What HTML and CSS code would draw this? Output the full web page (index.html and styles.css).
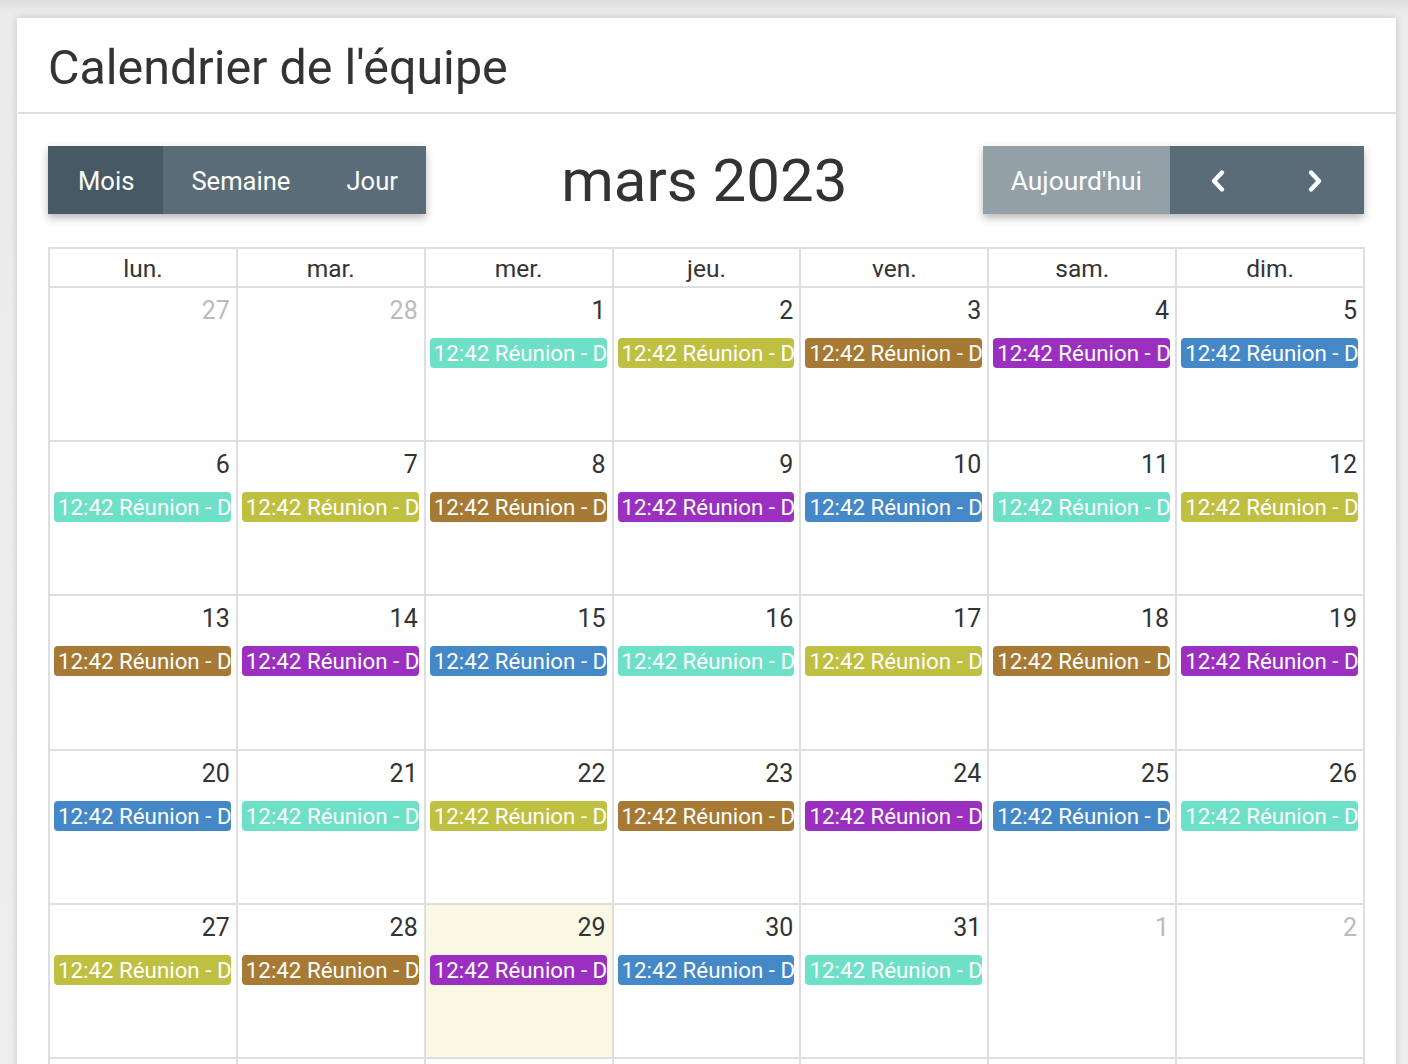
FILE: index.html
```html
<!DOCTYPE html>
<html lang="fr">
<head>
<meta charset="utf-8">
<title>Calendrier de l'équipe</title>
<link rel="stylesheet" href="styles.css">
</head>
<body>
<div class="card">
  <div class="card-header"><h1 class="card-title">Calendrier de l'équipe</h1></div>
  <div class="card-body">
    <div class="toolbar">
      <div class="btn-group">
        <button class="btn active">Mois</button>
        <button class="btn">Semaine</button>
        <button class="btn">Jour</button>
      </div>
      <h2 class="cal-title">mars 2023</h2>
      <div class="btn-group">
        <button class="btn btn-light">Aujourd'hui</button>
        <button class="btn btn-icon" aria-label="précédent"><svg width="18" height="24" viewBox="0 0 18 24"><path d="M13 3.5 L5 12 L13 20.5" fill="none" stroke="#fff" stroke-width="4.4" stroke-linecap="round" stroke-linejoin="round"/></svg></button>
        <button class="btn btn-icon" aria-label="suivant"><svg width="18" height="24" viewBox="0 0 18 24"><path d="M5 3.5 L13 12 L5 20.5" fill="none" stroke="#fff" stroke-width="4.4" stroke-linecap="round" stroke-linejoin="round"/></svg></button>
      </div>
    </div>

    <div class="month">
      <div class="dow">lun.</div><div class="dow">mar.</div><div class="dow">mer.</div><div class="dow">jeu.</div><div class="dow">ven.</div><div class="dow">sam.</div><div class="dow">dim.</div>

      <div class="day other"><div class="num">27</div></div>
      <div class="day other"><div class="num">28</div></div>
      <div class="day"><div class="num">1</div><div class="ev teal">12:42 Réunion - D</div></div>
      <div class="day"><div class="num">2</div><div class="ev olive">12:42 Réunion - D</div></div>
      <div class="day"><div class="num">3</div><div class="ev brown">12:42 Réunion - D</div></div>
      <div class="day"><div class="num">4</div><div class="ev purple">12:42 Réunion - D</div></div>
      <div class="day"><div class="num">5</div><div class="ev blue">12:42 Réunion - D</div></div>

      <div class="day"><div class="num">6</div><div class="ev teal">12:42 Réunion - D</div></div>
      <div class="day"><div class="num">7</div><div class="ev olive">12:42 Réunion - D</div></div>
      <div class="day"><div class="num">8</div><div class="ev brown">12:42 Réunion - D</div></div>
      <div class="day"><div class="num">9</div><div class="ev purple">12:42 Réunion - D</div></div>
      <div class="day"><div class="num">10</div><div class="ev blue">12:42 Réunion - D</div></div>
      <div class="day"><div class="num">11</div><div class="ev teal">12:42 Réunion - D</div></div>
      <div class="day"><div class="num">12</div><div class="ev olive">12:42 Réunion - D</div></div>

      <div class="day"><div class="num">13</div><div class="ev brown">12:42 Réunion - D</div></div>
      <div class="day"><div class="num">14</div><div class="ev purple">12:42 Réunion - D</div></div>
      <div class="day"><div class="num">15</div><div class="ev blue">12:42 Réunion - D</div></div>
      <div class="day"><div class="num">16</div><div class="ev teal">12:42 Réunion - D</div></div>
      <div class="day"><div class="num">17</div><div class="ev olive">12:42 Réunion - D</div></div>
      <div class="day"><div class="num">18</div><div class="ev brown">12:42 Réunion - D</div></div>
      <div class="day"><div class="num">19</div><div class="ev purple">12:42 Réunion - D</div></div>

      <div class="day"><div class="num">20</div><div class="ev blue">12:42 Réunion - D</div></div>
      <div class="day"><div class="num">21</div><div class="ev teal">12:42 Réunion - D</div></div>
      <div class="day"><div class="num">22</div><div class="ev olive">12:42 Réunion - D</div></div>
      <div class="day"><div class="num">23</div><div class="ev brown">12:42 Réunion - D</div></div>
      <div class="day"><div class="num">24</div><div class="ev purple">12:42 Réunion - D</div></div>
      <div class="day"><div class="num">25</div><div class="ev blue">12:42 Réunion - D</div></div>
      <div class="day"><div class="num">26</div><div class="ev teal">12:42 Réunion - D</div></div>

      <div class="day"><div class="num">27</div><div class="ev olive">12:42 Réunion - D</div></div>
      <div class="day"><div class="num">28</div><div class="ev brown">12:42 Réunion - D</div></div>
      <div class="day today"><div class="num">29</div><div class="ev purple">12:42 Réunion - D</div></div>
      <div class="day"><div class="num">30</div><div class="ev blue">12:42 Réunion - D</div></div>
      <div class="day"><div class="num">31</div><div class="ev teal">12:42 Réunion - D</div></div>
      <div class="day other"><div class="num">1</div></div>
      <div class="day other"><div class="num">2</div></div>

      <div class="day other"></div>
      <div class="day other"></div>
      <div class="day other"></div>
      <div class="day other"></div>
      <div class="day other"></div>
      <div class="day other"></div>
      <div class="day other"></div>
    </div>
  </div>
</div>
</body>
</html>
```

FILE: styles.css
```css
* { box-sizing: border-box; }

html, body { height: 100%; }

body {
  margin: 0;
  padding: 18px 12px 0 17px;
  background: linear-gradient(#dedede 0, #ececec 14px, #eeeeee 100%);
  font-family: Roboto, "Liberation Sans", sans-serif;
  color: #333;
  overflow: hidden;
}

.card {
  background: #fff;
  box-shadow: 0 0 8px rgba(0, 0, 0, 0.16);
}

.card-header {
  height: 96px;
  display: flex;
  align-items: center;
  padding: 4px 32px 0 30px;
  border-bottom: 2px solid #dedede;
  margin-left: 1px;
}

.card-title {
  margin: 0;
  font-size: 48.4px;
  font-weight: 400;
  color: #333;
}

.card-body {
  padding: 32px 32px 0 31px;
}

.toolbar {
  display: flex;
  align-items: center;
  justify-content: space-between;
  height: 68px;
  margin-bottom: 33px;
}

.btn-group {
  display: flex;
  height: 68px;
  box-shadow: 0 4px 8px rgba(0, 0, 0, 0.28);
}

.btn {
  border: 0;
  margin: 0;
  padding: 1px 28px 0;
  height: 68px;
  background: #5a6c78;
  color: #fff;
  font-family: Roboto, "Liberation Sans", sans-serif;
  font-size: 25.6px;
  font-weight: 400;
  display: flex;
  align-items: center;
  justify-content: center;
}

.btn.active {
  background: #485966;
  padding: 1px 29px 0 30px;
}

.btn-light {
  background: #93a0a7;
  font-size: 26.4px;
}

.btn-icon {
  width: 97px;
  padding: 2px 0 0;
}

.cal-title {
  margin: 0;
  font-size: 60px;
  font-weight: 400;
  color: #333;
}

.month {
  display: grid;
  grid-template-columns: repeat(7, 1fr);
  grid-template-rows: 39px repeat(6, 154.2px);
  width: 1317px;
  border-left: 2px solid #dedede;
  border-top: 2px solid #dedede;
}

.dow {
  border-right: 2px solid #dedede;
  border-bottom: 2px solid #dedede;
  text-align: center;
  font-size: 24.5px;
  line-height: 36px;
  padding-top: 2px;
  color: #333;
}

.day {
  border-right: 2px solid #dedede;
  border-bottom: 2px solid #dedede;
  min-width: 0;
  overflow: hidden;
}

.day.today {
  background: #faf7e4;
}

.num {
  text-align: right;
  padding: 9px 6px 0 0;
  font-size: 25px;
  line-height: 28px;
  color: #333;
}

.day.other .num {
  color: #bbbbbb;
}

.ev {
  margin: 13px 5px 0 4px;
  height: 30px;
  line-height: 30px;
  padding: 0 0 0 4px;
  border-radius: 4px;
  font-size: 22.3px;
  color: #fff;
  white-space: nowrap;
  overflow: hidden;
}

.teal { background: #6ee0c8; }
.olive { background: #bfc042; }
.brown { background: #a67a34; }
.purple { background: #9b30c0; }
.blue { background: #4488c8; }
```
